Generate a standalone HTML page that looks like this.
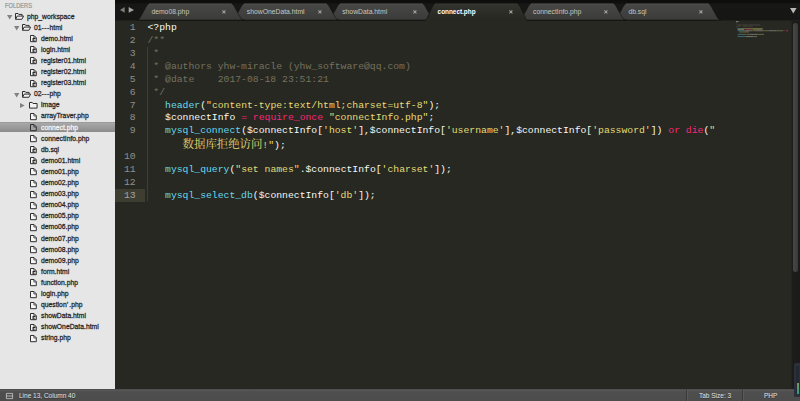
<!DOCTYPE html>
<html><head><meta charset="utf-8"><title>Sublime Text</title>
<style>
html,body{margin:0;padding:0;}
body{width:800px;height:401px;overflow:hidden;position:relative;background:#272822;font-family:"Liberation Sans","Noto Sans CJK SC",sans-serif;}
#sb{position:absolute;left:0;top:0;width:115px;height:389px;background:#e6e6e6;overflow:hidden;}
#sb .hd{position:absolute;left:5px;top:1px;font-size:6.3px;line-height:9px;color:#979797;-webkit-text-stroke:.2px #979797;transform:scaleX(.91);transform-origin:0 50%;}
.ic{position:absolute;display:block;overflow:visible;}
.nm{position:absolute;height:11px;line-height:11px;font-size:7.5px;color:#262626;white-space:nowrap;transform:scaleX(.905);transform-origin:0 50%;-webkit-text-stroke:.28px #262626;margin-top:-.25px}
.sel{position:absolute;left:0;width:115px;height:10.6px;background:linear-gradient(#929292,#a8a8a8 12%,#8b8b8b);}
.selt{color:#f4f4f4;-webkit-text-stroke-color:#f4f4f4}
#tabs{z-index:1;position:absolute;left:115px;top:0;width:685px;height:20.5px;background:linear-gradient(#0d0d0c,#0f0f0e 12%,#171715 22%,#161614 93%,#23241f);}
#tabs .in{position:absolute;left:-115px;top:0;width:800px;height:20.5px;}
.tab{position:absolute;top:2.5px;display:block;overflow:visible}
.tl{position:absolute;top:7.2px;font-size:6.8px;line-height:9px;color:#c6c6be;white-space:nowrap;}
.tl.act{color:#fff;font-weight:bold;font-size:6.4px}
.tx{position:absolute;top:4.5px;font-size:7px;line-height:9px;color:#8a8a85;}
#ed{z-index:2;position:absolute;left:115px;top:20.5px;width:685px;height:368.5px;background:#272822;overflow:hidden;}
#ed .in{position:absolute;left:-115px;top:-20.5px;width:800px;height:401px;}
.ln{position:absolute;left:115px;width:20.7px;text-align:right;font-family:"Liberation Mono",monospace;font-size:9.75px;line-height:13px;color:#8f908a;height:13px;}
.lnc{color:#a4a49e;}
.cur{position:absolute;left:115px;width:29.5px;height:12.6px;margin-top:.3px;background:#3e3d32;}
.cl{position:absolute;left:147.5px;margin:0;font-family:"Liberation Mono","Noto Sans CJK SC",monospace;font-size:9.75px;line-height:13px;height:13px;color:#f8f8f2;white-space:pre;}
.cj{font-family:"Noto Serif CJK SC","Noto Sans CJK SC",serif;font-size:11.4px;line-height:13px;vertical-align:baseline} .c{color:#75715e} .s{color:#e6db74} .k{color:#f92672} .f{color:#66d9ef}
#mm i{position:absolute;display:block;height:.8px;opacity:.9}
#st{position:absolute;left:0;top:388.8px;width:800px;height:12.2px;background:linear-gradient(#3c3c3c,#5c5c5c 8%,#4f4f4f 20%,#4c4c4c);font-size:7.3px;line-height:12px;color:#e2e2e2;}
#st div{position:absolute;top:1.2px;white-space:nowrap;transform:scaleX(.89);transform-origin:0 50%;text-shadow:0 .5px 0 #333}
#st .sep{top:.8px;width:.8px;height:12px;background:#3a3a3a;transform:none;box-shadow:.8px 0 0 #5c5c5c}
</style></head><body>
<div id="sb"><div class="hd">FOLDERS</div>
<svg class="ic" style="left:6.8px;top:14.90px" width="5.4" height="4.5" viewBox="0 0 5.4 4.5"><path d="M0 0h5.4l-2.7 4.5z" fill="#828282"/></svg>
<svg class="ic" style="left:14.9px;top:12.80px" width="9.2" height="6.8" viewBox="0 0 9.2 6.8"><path d="M.5 6.2V.5h2.6l.7 .9h3.3v1.6" fill="none" stroke="#2e2e2e" stroke-width="1"/><path d="M.6 6.3l1.6-3.2h6.4l-1.7 3.2z" fill="#f2f2f2" stroke="#2e2e2e" stroke-width="1" stroke-linejoin="round"/></svg>
<div class="nm" style="left:26.8px;top:10.80px">php_workspace</div>
<svg class="ic" style="left:13.6px;top:26.00px" width="5.4" height="4.5" viewBox="0 0 5.4 4.5"><path d="M0 0h5.4l-2.7 4.5z" fill="#828282"/></svg>
<svg class="ic" style="left:21.8px;top:23.90px" width="9.2" height="6.8" viewBox="0 0 9.2 6.8"><path d="M.5 6.2V.5h2.6l.7 .9h3.3v1.6" fill="none" stroke="#2e2e2e" stroke-width="1"/><path d="M.6 6.3l1.6-3.2h6.4l-1.7 3.2z" fill="#f2f2f2" stroke="#2e2e2e" stroke-width="1" stroke-linejoin="round"/></svg>
<div class="nm" style="left:33.9px;top:21.90px">01<span style="letter-spacing:.45px">---</span>html</div>
<svg class="ic" style="left:30px;top:35.20px" width="6.8" height="7.2" viewBox="0 0 6.8 7.2"><path d="M.5 .5h3.5l2.3 2.3v3.9h-5.8z" fill="#f6f6f6" stroke="#2e2e2e" stroke-width="1"/><path d="M3.9 .7v2.3h2.3" fill="none" stroke="#2e2e2e" stroke-width=".8"/><path d="M5.4 3.7h-2.3v2.3h2.3" fill="none" stroke="#2a2a2a" stroke-width="1.15"/></svg>
<div class="nm" style="left:40.8px;top:33.00px">demo.html</div>
<svg class="ic" style="left:30px;top:46.30px" width="6.8" height="7.2" viewBox="0 0 6.8 7.2"><path d="M.5 .5h3.5l2.3 2.3v3.9h-5.8z" fill="#f6f6f6" stroke="#2e2e2e" stroke-width="1"/><path d="M3.9 .7v2.3h2.3" fill="none" stroke="#2e2e2e" stroke-width=".8"/><path d="M5.4 3.7h-2.3v2.3h2.3" fill="none" stroke="#2a2a2a" stroke-width="1.15"/></svg>
<div class="nm" style="left:40.8px;top:44.10px">login.html</div>
<svg class="ic" style="left:30px;top:57.40px" width="6.8" height="7.2" viewBox="0 0 6.8 7.2"><path d="M.5 .5h3.5l2.3 2.3v3.9h-5.8z" fill="#f6f6f6" stroke="#2e2e2e" stroke-width="1"/><path d="M3.9 .7v2.3h2.3" fill="none" stroke="#2e2e2e" stroke-width=".8"/><path d="M5.4 3.7h-2.3v2.3h2.3" fill="none" stroke="#2a2a2a" stroke-width="1.15"/></svg>
<div class="nm" style="left:40.8px;top:55.20px">register01.html</div>
<svg class="ic" style="left:30px;top:68.50px" width="6.8" height="7.2" viewBox="0 0 6.8 7.2"><path d="M.5 .5h3.5l2.3 2.3v3.9h-5.8z" fill="#f6f6f6" stroke="#2e2e2e" stroke-width="1"/><path d="M3.9 .7v2.3h2.3" fill="none" stroke="#2e2e2e" stroke-width=".8"/><path d="M5.4 3.7h-2.3v2.3h2.3" fill="none" stroke="#2a2a2a" stroke-width="1.15"/></svg>
<div class="nm" style="left:40.8px;top:66.30px">register02.html</div>
<svg class="ic" style="left:30px;top:79.60px" width="6.8" height="7.2" viewBox="0 0 6.8 7.2"><path d="M.5 .5h3.5l2.3 2.3v3.9h-5.8z" fill="#f6f6f6" stroke="#2e2e2e" stroke-width="1"/><path d="M3.9 .7v2.3h2.3" fill="none" stroke="#2e2e2e" stroke-width=".8"/><path d="M5.4 3.7h-2.3v2.3h2.3" fill="none" stroke="#2a2a2a" stroke-width="1.15"/></svg>
<div class="nm" style="left:40.8px;top:77.40px">register03.html</div>
<svg class="ic" style="left:13.6px;top:92.60px" width="5.4" height="4.5" viewBox="0 0 5.4 4.5"><path d="M0 0h5.4l-2.7 4.5z" fill="#828282"/></svg>
<svg class="ic" style="left:21.8px;top:90.50px" width="9.2" height="6.8" viewBox="0 0 9.2 6.8"><path d="M.5 6.2V.5h2.6l.7 .9h3.3v1.6" fill="none" stroke="#2e2e2e" stroke-width="1"/><path d="M.6 6.3l1.6-3.2h6.4l-1.7 3.2z" fill="#f2f2f2" stroke="#2e2e2e" stroke-width="1" stroke-linejoin="round"/></svg>
<div class="nm" style="left:33.9px;top:88.50px">02<span style="letter-spacing:.45px">---</span>php</div>
<svg class="ic" style="left:20.3px;top:102.80px" width="4.7" height="5" viewBox="0 0 4.7 5"><path d="M0 0v5l4.7-2.5z" fill="#828282"/></svg>
<svg class="ic" style="left:29.1px;top:101.90px" width="8.6" height="6.6" viewBox="0 0 8.6 6.6"><path d="M.5 6.1V.5h2.8l.7 1h4.1v4.6z" fill="#f2f2f2" stroke="#2e2e2e" stroke-width="1" stroke-linejoin="round"/></svg>
<div class="nm" style="left:40.8px;top:99.60px">image</div>
<svg class="ic" style="left:30px;top:112.90px" width="6.8" height="7.2" viewBox="0 0 6.8 7.2"><path d="M.5 .5h3.5l2.3 2.3v3.9h-5.8z" fill="#f6f6f6" stroke="#2e2e2e" stroke-width="1"/><path d="M3.9 .7v2.3h2.3" fill="none" stroke="#2e2e2e" stroke-width=".8"/></svg>
<div class="nm" style="left:40.8px;top:110.70px">arrayTraver.php</div>
<div class="sel" style="top:121.80px"></div>
<svg class="ic" style="left:30px;top:124.00px" width="6.8" height="7.2" viewBox="0 0 6.8 7.2"><path d="M.5 .5h3.5l2.3 2.3v3.9h-5.8z" fill="#a2a2a2" stroke="#2e2e2e" stroke-width="1"/><path d="M3.9 .7v2.3h2.3" fill="none" stroke="#2e2e2e" stroke-width=".8"/></svg>
<div class="nm selt" style="left:40.8px;top:121.80px">connect.php</div>
<svg class="ic" style="left:30px;top:135.10px" width="6.8" height="7.2" viewBox="0 0 6.8 7.2"><path d="M.5 .5h3.5l2.3 2.3v3.9h-5.8z" fill="#f6f6f6" stroke="#2e2e2e" stroke-width="1"/><path d="M3.9 .7v2.3h2.3" fill="none" stroke="#2e2e2e" stroke-width=".8"/></svg>
<div class="nm" style="left:40.8px;top:132.90px">connectInfo.php</div>
<svg class="ic" style="left:30px;top:146.20px" width="6.8" height="7.2" viewBox="0 0 6.8 7.2"><path d="M.5 .5h3.5l2.3 2.3v3.9h-5.8z" fill="#f6f6f6" stroke="#2e2e2e" stroke-width="1"/><path d="M3.9 .7v2.3h2.3" fill="none" stroke="#2e2e2e" stroke-width=".8"/><path d="M5.4 3.7h-2.3v2.3h2.3" fill="none" stroke="#2a2a2a" stroke-width="1.15"/></svg>
<div class="nm" style="left:40.8px;top:144.00px">db.sql</div>
<svg class="ic" style="left:30px;top:157.30px" width="6.8" height="7.2" viewBox="0 0 6.8 7.2"><path d="M.5 .5h3.5l2.3 2.3v3.9h-5.8z" fill="#f6f6f6" stroke="#2e2e2e" stroke-width="1"/><path d="M3.9 .7v2.3h2.3" fill="none" stroke="#2e2e2e" stroke-width=".8"/><path d="M5.4 3.7h-2.3v2.3h2.3" fill="none" stroke="#2a2a2a" stroke-width="1.15"/></svg>
<div class="nm" style="left:40.8px;top:155.10px">demo01.html</div>
<svg class="ic" style="left:30px;top:168.40px" width="6.8" height="7.2" viewBox="0 0 6.8 7.2"><path d="M.5 .5h3.5l2.3 2.3v3.9h-5.8z" fill="#f6f6f6" stroke="#2e2e2e" stroke-width="1"/><path d="M3.9 .7v2.3h2.3" fill="none" stroke="#2e2e2e" stroke-width=".8"/></svg>
<div class="nm" style="left:40.8px;top:166.20px">demo01.php</div>
<svg class="ic" style="left:30px;top:179.50px" width="6.8" height="7.2" viewBox="0 0 6.8 7.2"><path d="M.5 .5h3.5l2.3 2.3v3.9h-5.8z" fill="#f6f6f6" stroke="#2e2e2e" stroke-width="1"/><path d="M3.9 .7v2.3h2.3" fill="none" stroke="#2e2e2e" stroke-width=".8"/></svg>
<div class="nm" style="left:40.8px;top:177.30px">demo02.php</div>
<svg class="ic" style="left:30px;top:190.60px" width="6.8" height="7.2" viewBox="0 0 6.8 7.2"><path d="M.5 .5h3.5l2.3 2.3v3.9h-5.8z" fill="#f6f6f6" stroke="#2e2e2e" stroke-width="1"/><path d="M3.9 .7v2.3h2.3" fill="none" stroke="#2e2e2e" stroke-width=".8"/></svg>
<div class="nm" style="left:40.8px;top:188.40px">demo03.php</div>
<svg class="ic" style="left:30px;top:201.70px" width="6.8" height="7.2" viewBox="0 0 6.8 7.2"><path d="M.5 .5h3.5l2.3 2.3v3.9h-5.8z" fill="#f6f6f6" stroke="#2e2e2e" stroke-width="1"/><path d="M3.9 .7v2.3h2.3" fill="none" stroke="#2e2e2e" stroke-width=".8"/></svg>
<div class="nm" style="left:40.8px;top:199.50px">demo04.php</div>
<svg class="ic" style="left:30px;top:212.80px" width="6.8" height="7.2" viewBox="0 0 6.8 7.2"><path d="M.5 .5h3.5l2.3 2.3v3.9h-5.8z" fill="#f6f6f6" stroke="#2e2e2e" stroke-width="1"/><path d="M3.9 .7v2.3h2.3" fill="none" stroke="#2e2e2e" stroke-width=".8"/></svg>
<div class="nm" style="left:40.8px;top:210.60px">demo05.php</div>
<svg class="ic" style="left:30px;top:223.90px" width="6.8" height="7.2" viewBox="0 0 6.8 7.2"><path d="M.5 .5h3.5l2.3 2.3v3.9h-5.8z" fill="#f6f6f6" stroke="#2e2e2e" stroke-width="1"/><path d="M3.9 .7v2.3h2.3" fill="none" stroke="#2e2e2e" stroke-width=".8"/></svg>
<div class="nm" style="left:40.8px;top:221.70px">demo06.php</div>
<svg class="ic" style="left:30px;top:235.00px" width="6.8" height="7.2" viewBox="0 0 6.8 7.2"><path d="M.5 .5h3.5l2.3 2.3v3.9h-5.8z" fill="#f6f6f6" stroke="#2e2e2e" stroke-width="1"/><path d="M3.9 .7v2.3h2.3" fill="none" stroke="#2e2e2e" stroke-width=".8"/></svg>
<div class="nm" style="left:40.8px;top:232.80px">demo07.php</div>
<svg class="ic" style="left:30px;top:246.10px" width="6.8" height="7.2" viewBox="0 0 6.8 7.2"><path d="M.5 .5h3.5l2.3 2.3v3.9h-5.8z" fill="#f6f6f6" stroke="#2e2e2e" stroke-width="1"/><path d="M3.9 .7v2.3h2.3" fill="none" stroke="#2e2e2e" stroke-width=".8"/></svg>
<div class="nm" style="left:40.8px;top:243.90px">demo08.php</div>
<svg class="ic" style="left:30px;top:257.20px" width="6.8" height="7.2" viewBox="0 0 6.8 7.2"><path d="M.5 .5h3.5l2.3 2.3v3.9h-5.8z" fill="#f6f6f6" stroke="#2e2e2e" stroke-width="1"/><path d="M3.9 .7v2.3h2.3" fill="none" stroke="#2e2e2e" stroke-width=".8"/></svg>
<div class="nm" style="left:40.8px;top:255.00px">demo09.php</div>
<svg class="ic" style="left:30px;top:268.30px" width="6.8" height="7.2" viewBox="0 0 6.8 7.2"><path d="M.5 .5h3.5l2.3 2.3v3.9h-5.8z" fill="#f6f6f6" stroke="#2e2e2e" stroke-width="1"/><path d="M3.9 .7v2.3h2.3" fill="none" stroke="#2e2e2e" stroke-width=".8"/><path d="M5.4 3.7h-2.3v2.3h2.3" fill="none" stroke="#2a2a2a" stroke-width="1.15"/></svg>
<div class="nm" style="left:40.8px;top:266.10px">form.html</div>
<svg class="ic" style="left:30px;top:279.40px" width="6.8" height="7.2" viewBox="0 0 6.8 7.2"><path d="M.5 .5h3.5l2.3 2.3v3.9h-5.8z" fill="#f6f6f6" stroke="#2e2e2e" stroke-width="1"/><path d="M3.9 .7v2.3h2.3" fill="none" stroke="#2e2e2e" stroke-width=".8"/></svg>
<div class="nm" style="left:40.8px;top:277.20px">function.php</div>
<svg class="ic" style="left:30px;top:290.50px" width="6.8" height="7.2" viewBox="0 0 6.8 7.2"><path d="M.5 .5h3.5l2.3 2.3v3.9h-5.8z" fill="#f6f6f6" stroke="#2e2e2e" stroke-width="1"/><path d="M3.9 .7v2.3h2.3" fill="none" stroke="#2e2e2e" stroke-width=".8"/></svg>
<div class="nm" style="left:40.8px;top:288.30px">login.php</div>
<svg class="ic" style="left:30px;top:301.60px" width="6.8" height="7.2" viewBox="0 0 6.8 7.2"><path d="M.5 .5h3.5l2.3 2.3v3.9h-5.8z" fill="#f6f6f6" stroke="#2e2e2e" stroke-width="1"/><path d="M3.9 .7v2.3h2.3" fill="none" stroke="#2e2e2e" stroke-width=".8"/></svg>
<div class="nm" style="left:40.8px;top:299.40px">question<span style="letter-spacing:1.2px">’</span>.php</div>
<svg class="ic" style="left:30px;top:312.70px" width="6.8" height="7.2" viewBox="0 0 6.8 7.2"><path d="M.5 .5h3.5l2.3 2.3v3.9h-5.8z" fill="#f6f6f6" stroke="#2e2e2e" stroke-width="1"/><path d="M3.9 .7v2.3h2.3" fill="none" stroke="#2e2e2e" stroke-width=".8"/><path d="M5.4 3.7h-2.3v2.3h2.3" fill="none" stroke="#2a2a2a" stroke-width="1.15"/></svg>
<div class="nm" style="left:40.8px;top:310.50px">showData.html</div>
<svg class="ic" style="left:30px;top:323.80px" width="6.8" height="7.2" viewBox="0 0 6.8 7.2"><path d="M.5 .5h3.5l2.3 2.3v3.9h-5.8z" fill="#f6f6f6" stroke="#2e2e2e" stroke-width="1"/><path d="M3.9 .7v2.3h2.3" fill="none" stroke="#2e2e2e" stroke-width=".8"/><path d="M5.4 3.7h-2.3v2.3h2.3" fill="none" stroke="#2a2a2a" stroke-width="1.15"/></svg>
<div class="nm" style="left:40.8px;top:321.60px">showOneData.html</div>
<svg class="ic" style="left:30px;top:334.90px" width="6.8" height="7.2" viewBox="0 0 6.8 7.2"><path d="M.5 .5h3.5l2.3 2.3v3.9h-5.8z" fill="#f6f6f6" stroke="#2e2e2e" stroke-width="1"/><path d="M3.9 .7v2.3h2.3" fill="none" stroke="#2e2e2e" stroke-width=".8"/></svg>
<div class="nm" style="left:40.8px;top:332.70px">string.php</div>
</div>
<div id="tabs"><div class="in">
<svg width="0" height="0" style="position:absolute"><defs>
<linearGradient id="ga" x1="0" y1="0" x2="0" y2="1"><stop offset="0" stop-color="#33342e"/><stop offset=".8" stop-color="#272822"/><stop offset="1" stop-color="#272822"/></linearGradient>
<linearGradient id="gi" x1="0" y1="0" x2="0" y2="1"><stop offset="0" stop-color="#484846"/><stop offset="1" stop-color="#3b3b39"/></linearGradient>
</defs></svg>
<svg class="ic" style="left:120.2px;top:7.3px" width="14" height="5.8" viewBox="0 0 14 5.8"><path d="M0 2.9l4.7-2.9v5.8z" fill="#7c7c79"/><path d="M14 2.9l-5.3-2.9v5.8z" fill="#a4a4a0"/></svg>
<svg class="tab" style="left:138.0px;z-index:7" width="104.6" height="20" viewBox="0 0 104.6 20"><path d="M1 17.5H103.6" stroke="#1a1a18" stroke-width="1" opacity=".8"/><path d="M-1.5 17C1.8 17 2.4 13.9 5.4 8.8C8.6 3.4 9.2 .4 12 .4H92.6C95.4 .4 96.0 3.4 99.2 8.8C102.2 13.9 102.8 17 106.1 17z" fill="url(#gi)" stroke="#131311" stroke-width=".6"/><path d="M11 .9H93.6" stroke="#555552" stroke-width=".7"/></svg>
<div class="tl" style="left:151.4px;z-index:9">demo08.php</div>
<svg class="ic" style="left:222.3px;top:9.9px;z-index:9" width="3.8" height="3.8" viewBox="0 0 3.8 3.8"><path d="M.4 .4l3 3M3.4 .4l-3 3" stroke="#9c9c96" stroke-width="1.1" fill="none"/></svg>
<svg class="tab" style="left:233.4px;z-index:6" width="104.6" height="20" viewBox="0 0 104.6 20"><path d="M1 17.5H103.6" stroke="#1a1a18" stroke-width="1" opacity=".8"/><path d="M-1.5 17C1.8 17 2.4 13.9 5.4 8.8C8.6 3.4 9.2 .4 12 .4H92.6C95.4 .4 96.0 3.4 99.2 8.8C102.2 13.9 102.8 17 106.1 17z" fill="url(#gi)" stroke="#131311" stroke-width=".6"/><path d="M11 .9H93.6" stroke="#555552" stroke-width=".7"/></svg>
<div class="tl" style="left:246.8px;z-index:9">showOneData.html</div>
<svg class="ic" style="left:317.7px;top:9.9px;z-index:9" width="3.8" height="3.8" viewBox="0 0 3.8 3.8"><path d="M.4 .4l3 3M3.4 .4l-3 3" stroke="#9c9c96" stroke-width="1.1" fill="none"/></svg>
<svg class="tab" style="left:328.8px;z-index:5" width="104.6" height="20" viewBox="0 0 104.6 20"><path d="M1 17.5H103.6" stroke="#1a1a18" stroke-width="1" opacity=".8"/><path d="M-1.5 17C1.8 17 2.4 13.9 5.4 8.8C8.6 3.4 9.2 .4 12 .4H92.6C95.4 .4 96.0 3.4 99.2 8.8C102.2 13.9 102.8 17 106.1 17z" fill="url(#gi)" stroke="#131311" stroke-width=".6"/><path d="M11 .9H93.6" stroke="#555552" stroke-width=".7"/></svg>
<div class="tl" style="left:342.2px;z-index:9">showData.html</div>
<svg class="ic" style="left:413.1px;top:9.9px;z-index:9" width="3.8" height="3.8" viewBox="0 0 3.8 3.8"><path d="M.4 .4l3 3M3.4 .4l-3 3" stroke="#9c9c96" stroke-width="1.1" fill="none"/></svg>
<svg class="tab" style="left:424.2px;z-index:8" width="104.6" height="20" viewBox="0 0 104.6 20"><path d="M-1.5 19.5C1.8 19.5 2.4 16.0 5.4 10.1C8.6 3.9 9.2 .4 12 .4H92.6C95.4 .4 96.0 3.9 99.2 10.1C102.2 16.0 102.8 19.5 106.1 19.5z" fill="url(#ga)" stroke="#131311" stroke-width=".6"/><path d="M11 .9H93.6" stroke="#3a3b35" stroke-width=".7"/></svg>
<div class="tl act" style="left:437.6px;z-index:9">connect.php</div>
<svg class="ic" style="left:508.5px;top:9.9px;z-index:9" width="3.8" height="3.8" viewBox="0 0 3.8 3.8"><path d="M.4 .4l3 3M3.4 .4l-3 3" stroke="#9c9c96" stroke-width="1.1" fill="none"/></svg>
<svg class="tab" style="left:519.6px;z-index:3" width="104.6" height="20" viewBox="0 0 104.6 20"><path d="M1 17.5H103.6" stroke="#1a1a18" stroke-width="1" opacity=".8"/><path d="M-1.5 17C1.8 17 2.4 13.9 5.4 8.8C8.6 3.4 9.2 .4 12 .4H92.6C95.4 .4 96.0 3.4 99.2 8.8C102.2 13.9 102.8 17 106.1 17z" fill="url(#gi)" stroke="#131311" stroke-width=".6"/><path d="M11 .9H93.6" stroke="#555552" stroke-width=".7"/></svg>
<div class="tl" style="left:533.0px;z-index:9">connectInfo.php</div>
<svg class="ic" style="left:603.9px;top:9.9px;z-index:9" width="3.8" height="3.8" viewBox="0 0 3.8 3.8"><path d="M.4 .4l3 3M3.4 .4l-3 3" stroke="#9c9c96" stroke-width="1.1" fill="none"/></svg>
<svg class="tab" style="left:615.0px;z-index:2" width="104.6" height="20" viewBox="0 0 104.6 20"><path d="M1 17.5H103.6" stroke="#1a1a18" stroke-width="1" opacity=".8"/><path d="M-1.5 17C1.8 17 2.4 13.9 5.4 8.8C8.6 3.4 9.2 .4 12 .4H92.6C95.4 .4 96.0 3.4 99.2 8.8C102.2 13.9 102.8 17 106.1 17z" fill="url(#gi)" stroke="#131311" stroke-width=".6"/><path d="M11 .9H93.6" stroke="#555552" stroke-width=".7"/></svg>
<div class="tl" style="left:628.4px;z-index:9">db.sql</div>
<svg class="ic" style="left:699.3px;top:9.9px;z-index:9" width="3.8" height="3.8" viewBox="0 0 3.8 3.8"><path d="M.4 .4l3 3M3.4 .4l-3 3" stroke="#9c9c96" stroke-width="1.1" fill="none"/></svg>
<svg class="ic" style="left:790.3px;top:8px" width="6.6" height="5.6" viewBox="0 0 6.6 5.6"><path d="M0 0h6.6l-3.3 5.6z" fill="#b8b8b4"/></svg>
</div></div>
<div id="ed"><div class="in">
<div class="ln" style="top:21.20px">1</div>
<pre class="cl" style="top:21.20px">&lt;?php</pre>
<div class="ln" style="top:34.09px">2</div>
<pre class="cl" style="top:34.09px"><span class="c">/**</span></pre>
<div class="ln" style="top:46.97px">3</div>
<pre class="cl" style="top:46.97px"><span class="c"> *</span></pre>
<div class="ln" style="top:59.86px">4</div>
<pre class="cl" style="top:59.86px"><span class="c"> * @authors yhw-miracle (yhw_software@qq.com)</span></pre>
<div class="ln" style="top:72.74px">5</div>
<pre class="cl" style="top:72.74px"><span class="c"> * @date    2017-08-18 23:51:21</span></pre>
<div class="ln" style="top:85.62px">6</div>
<pre class="cl" style="top:85.62px"><span class="c"> */</span></pre>
<div class="ln" style="top:98.51px">7</div>
<pre class="cl" style="top:98.51px">   <span class="f">header</span>(<span class="s">"content-type:text/html;charset=utf-8"</span>);</pre>
<div class="ln" style="top:111.39px">8</div>
<pre class="cl" style="top:111.39px">   $connectInfo <span class="k">=</span> <span class="k">require_once</span> <span class="s">"connectInfo.php"</span>;</pre>
<div class="ln" style="top:124.28px">9</div>
<pre class="cl" style="top:124.28px">   <span class="f">mysql_connect</span>($connectInfo[<span class="s">'host'</span>],$connectInfo[<span class="s">'username'</span>],$connectInfo[<span class="s">'password'</span>]) <span class="k">or</span> <span class="k">die</span>(<span class="s">"</span></pre>
<pre class="cl" style="top:137.16px">      <span class="s"><span class="cj">数据库拒绝访问</span>!"</span>);</pre>
<div class="ln" style="top:150.05px">10</div>
<div class="ln" style="top:162.93px">11</div>
<pre class="cl" style="top:162.93px">   <span class="f">mysql_query</span>(<span class="s">"set names"</span>.$connectInfo[<span class="s">'charset'</span>]);</pre>
<div class="ln" style="top:175.82px">12</div>
<div class="cur" style="top:188.70px"></div>
<div class="ln lnc" style="top:188.70px">13</div>
<pre class="cl" style="top:188.70px">   <span class="f">mysql_select_db</span>($connectInfo[<span class="s">'db'</span>]);</pre>
<div style="position:absolute;left:147px;top:47px;width:.7px;height:154px;background:#3d3e37"></div>
<svg id="mm" class="ic" style="left:730px;top:20px;opacity:.5" width="62" height="30" viewBox="0 0 62 30"><rect x="6.00" y="1.00" width="2.68" height=".85" fill="#d8d8d2"/><rect x="6.00" y="2.17" width="1.61" height=".85" fill="#6a6858"/><rect x="6.54" y="3.34" width="0.54" height=".85" fill="#6a6858"/><rect x="6.54" y="4.51" width="0.54" height=".85" fill="#6a6858"/><rect x="7.61" y="4.51" width="4.29" height=".85" fill="#6a6858"/><rect x="12.43" y="4.51" width="5.90" height=".85" fill="#6a6858"/><rect x="18.86" y="4.51" width="11.26" height=".85" fill="#6a6858"/><rect x="6.54" y="5.68" width="0.54" height=".85" fill="#6a6858"/><rect x="7.61" y="5.68" width="2.68" height=".85" fill="#6a6858"/><rect x="12.43" y="5.68" width="5.36" height=".85" fill="#6a6858"/><rect x="18.33" y="5.68" width="4.29" height=".85" fill="#6a6858"/><rect x="6.54" y="6.85" width="1.07" height=".85" fill="#6a6858"/><rect x="7.61" y="8.02" width="3.22" height=".85" fill="#5cc4dc"/><rect x="10.82" y="8.02" width="0.54" height=".85" fill="#d8d8d2"/><rect x="11.36" y="8.02" width="20.37" height=".85" fill="#c4ba62"/><rect x="31.73" y="8.02" width="1.07" height=".85" fill="#d8d8d2"/><rect x="7.61" y="9.19" width="6.43" height=".85" fill="#d8d8d2"/><rect x="14.58" y="9.19" width="0.54" height=".85" fill="#e0246a"/><rect x="15.65" y="9.19" width="6.43" height=".85" fill="#e0246a"/><rect x="22.62" y="9.19" width="9.11" height=".85" fill="#c4ba62"/><rect x="31.73" y="9.19" width="0.54" height=".85" fill="#d8d8d2"/><rect x="7.61" y="10.36" width="6.97" height=".85" fill="#5cc4dc"/><rect x="14.58" y="10.36" width="7.50" height=".85" fill="#d8d8d2"/><rect x="22.08" y="10.36" width="3.22" height=".85" fill="#c4ba62"/><rect x="25.30" y="10.36" width="8.04" height=".85" fill="#d8d8d2"/><rect x="33.34" y="10.36" width="5.36" height=".85" fill="#c4ba62"/><rect x="38.70" y="10.36" width="8.04" height=".85" fill="#d8d8d2"/><rect x="46.74" y="10.36" width="5.36" height=".85" fill="#c4ba62"/><rect x="52.10" y="10.36" width="1.07" height=".85" fill="#d8d8d2"/><rect x="53.70" y="10.36" width="1.07" height=".85" fill="#e0246a"/><rect x="55.31" y="10.36" width="1.61" height=".85" fill="#e0246a"/><rect x="56.92" y="10.36" width="0.54" height=".85" fill="#d8d8d2"/><rect x="57.46" y="10.36" width="0.54" height=".85" fill="#c4ba62"/><rect x="9.22" y="11.53" width="7.50" height=".85" fill="#c4ba62"/><rect x="16.72" y="11.53" width="1.07" height=".85" fill="#d8d8d2"/><rect x="17.79" y="11.53" width="1.07" height=".85" fill="#d8d8d2"/><rect x="7.61" y="13.87" width="5.90" height=".85" fill="#5cc4dc"/><rect x="13.50" y="13.87" width="0.54" height=".85" fill="#d8d8d2"/><rect x="14.04" y="13.87" width="2.14" height=".85" fill="#c4ba62"/><rect x="16.72" y="13.87" width="3.22" height=".85" fill="#c4ba62"/><rect x="19.94" y="13.87" width="7.50" height=".85" fill="#d8d8d2"/><rect x="27.44" y="13.87" width="4.82" height=".85" fill="#c4ba62"/><rect x="32.26" y="13.87" width="1.61" height=".85" fill="#d8d8d2"/><rect x="7.61" y="16.21" width="8.04" height=".85" fill="#5cc4dc"/><rect x="15.65" y="16.21" width="7.50" height=".85" fill="#d8d8d2"/><rect x="23.15" y="16.21" width="2.14" height=".85" fill="#c4ba62"/><rect x="25.30" y="16.21" width="1.61" height=".85" fill="#d8d8d2"/></svg>
<div style="position:absolute;left:791.2px;top:20.5px;width:8.8px;height:368.5px;background:linear-gradient(90deg,#252622,#1c1c1a 18%,#1b1b19)"></div>
<div style="position:absolute;left:793px;top:23px;width:5px;height:249px;background:linear-gradient(90deg,#48484a,#3a3a3a);border-radius:2.5px"></div>

</div></div>
<div id="st">
<svg class="ic" style="left:6px;top:4.1px" width="7" height="6" viewBox="0 0 7 6"><path d="M.4 .4h6.2v5.2h-6.2zM.4 3h6.2" fill="none" stroke="#c8c8c8" stroke-width=".8"/></svg>
<div style="left:18.5px">Line 13, Column 40</div>
<div class="sep" style="left:686.2px"></div>
<div style="left:699px">Tab Size: 3</div>
<div class="sep" style="left:742.4px"></div>
<div style="left:764px">PHP</div>
</div>
<div style="position:absolute;left:794.4px;top:363px;width:7px;height:34px;background:#2b303b;border-radius:1.5px;z-index:20"></div>
<div style="position:absolute;left:796px;top:366px;width:3px;height:28px;background:#232832;z-index:21"></div>
<div style="position:absolute;left:796.6px;top:383px;width:2.4px;height:11px;background:linear-gradient(#7a9a5a,#2f9a8a);z-index:22"></div>
</body></html>
